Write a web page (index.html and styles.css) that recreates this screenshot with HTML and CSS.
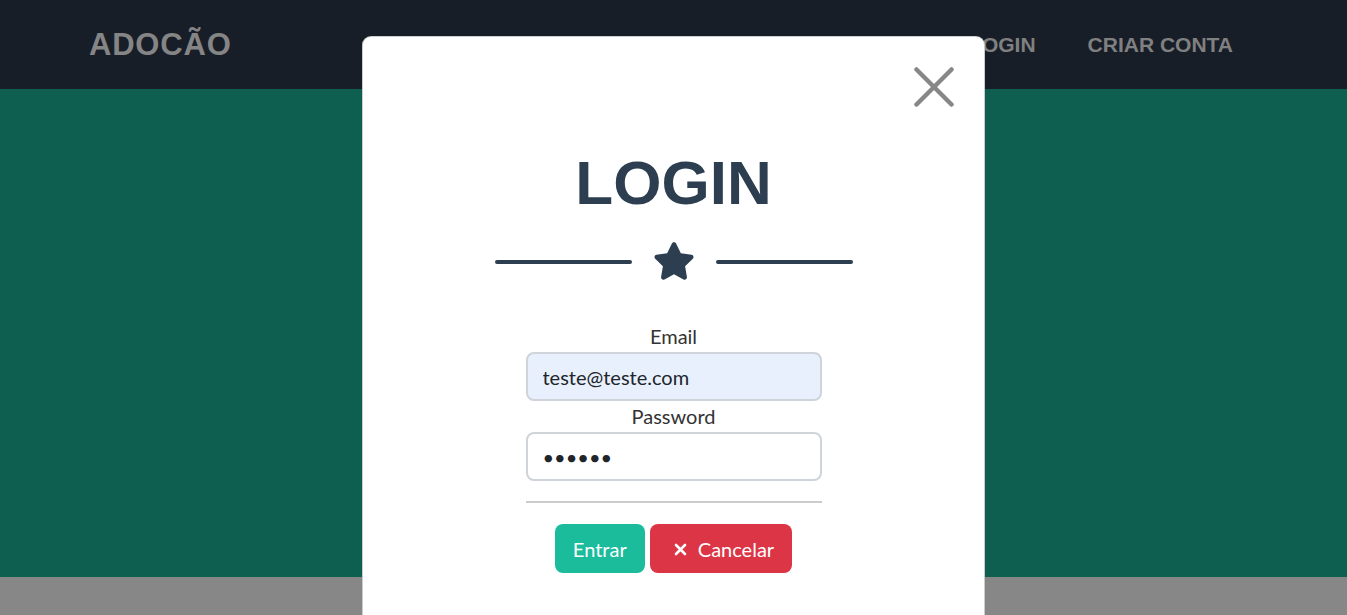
FILE: index.html
```html
<!DOCTYPE html>
<html lang="pt">
<head>
<meta charset="utf-8">
<title>Adocão - Login</title>
<link rel="stylesheet" href="styles.css">
</head>
<body>
<div class="page">
  <header class="navbar">
    <a class="brand" href="#">ADOCÃO</a>
    <nav class="nav-links">
      <a class="nav-link" href="#">LOGIN</a>
      <a class="nav-link" href="#">CRIAR CONTA</a>
    </nav>
  </header>
  <section class="masthead"></section>
  <footer class="footer"></footer>
</div>

<div class="overlay">
  <div class="modal">
    <button class="close" type="button" aria-label="Fechar">
      <svg width="40" height="40" viewBox="0 0 40 40"><path d="M2.5 2.5 L37.5 37.5 M37.5 2.5 L2.5 37.5" stroke="#878787" stroke-width="4.5" stroke-linecap="round" fill="none"/></svg>
    </button>
    <h2 class="title">LOGIN</h2>
    <div class="divider">
      <span class="divider-line"></span>
      <svg class="star" width="42" height="40" viewBox="0 0 576 540"><path fill="#2c3e50" d="M259.3 17.8L194 150.2 47.9 171.5c-26.2 3.8-36.7 36.1-17.7 54.6l105.7 103-25 145.5c-4.5 26.3 23.2 46 46.4 33.7L288 439.6l130.7 68.7c23.2 12.2 50.9-7.4 46.4-33.7l-25-145.5 105.7-103c19-18.5 8.5-50.8-17.7-54.6L382 150.2 316.7 17.8c-11.7-23.6-45.6-23.9-57.4 0z"/></svg>
      <span class="divider-line"></span>
    </div>
    <form class="form">
      <label class="label" for="email">Email</label>
      <input class="input autofill" id="email" type="email" value="teste@teste.com">
      <label class="label" for="password">Password</label>
      <input class="input" id="password" type="password" value="123456">
      <hr class="rule">
      <div class="actions">
        <button class="btn btn-primary" type="button">Entrar</button>
        <button class="btn btn-danger" type="button"><span class="icon"><svg width="13" height="13" viewBox="0 0 13 13"><path d="M2 2 L11 11 M11 2 L2 11" stroke="#fff" stroke-width="2.6" stroke-linecap="round" fill="none"/></svg></span> Cancelar</button>
      </div>
    </form>
  </div>
</div>
</body>
</html>
```

FILE: styles.css
```css
* { box-sizing: border-box; }

html, body {
  margin: 0;
  padding: 0;
  width: 1347px;
  height: 615px;
  overflow: hidden;
}

body {
  font-family: Lato, "Liberation Sans", sans-serif;
  position: relative;
}

.page {
  display: flex;
  flex-direction: column;
  height: 615px;
}

.navbar {
  height: 89px;
  background: #171e28;
  display: flex;
  align-items: center;
  justify-content: space-between;
  padding: 0 114px 0 89px;
}

.brand {
  font-family: "Liberation Sans", Arial, sans-serif;
  font-weight: 700;
  font-size: 31px;
  line-height: 1;
  letter-spacing: 0.8px;
  color: #858585;
  text-decoration: none;
}

.nav-links {
  display: flex;
  align-items: center;
  gap: 52px;
}

.nav-link {
  font-family: "Liberation Sans", Arial, sans-serif;
  font-weight: 700;
  font-size: 21px;
  line-height: 1;
  color: #808080;
  text-decoration: none;
}

.masthead {
  height: 488px;
  background: #0e5f4f;
}

.footer {
  flex: 1;
  background: #878787;
}

.overlay {
  position: absolute;
  inset: 0;
  display: flex;
  justify-content: center;
  align-items: flex-start;
}

.modal {
  position: relative;
  margin-top: 36px;
  width: 623px;
  height: 700px;
  background: #fff;
  border: 1px solid rgba(0, 0, 0, 0.2);
  border-radius: 9px;
  display: flex;
  flex-direction: column;
  align-items: center;
  padding-top: 115px;
}

.close {
  position: absolute;
  top: 30px;
  right: 30px;
  width: 40px;
  height: 40px;
  padding: 0;
  border: 0;
  background: none;
  display: block;
}

.close svg { display: block; }

.title {
  margin: 0;
  font-family: "Liberation Sans", Arial, sans-serif;
  font-weight: 700;
  font-size: 62px;
  line-height: 62px;
  color: #2c3e50;
}

.divider {
  margin-top: 28px;
  display: flex;
  align-items: center;
  gap: 21px;
  height: 40px;
}

.divider-line {
  width: 137px;
  height: 4px;
  border-radius: 2px;
  background: #2c3e50;
}

.star { display: block; }

.form {
  margin-top: 39px;
  width: 296px;
  display: flex;
  flex-direction: column;
  align-items: stretch;
}

.label {
  display: block;
  text-align: center;
  font-size: 20px;
  line-height: 30px;
  color: #333;
  margin-bottom: 1px;
}

.input {
  height: 49px;
  width: 100%;
  border: 2px solid #ced4da;
  border-radius: 8px;
  padding: 8px 15px;
  font-family: Lato, "Liberation Sans", sans-serif;
  font-size: 20px;
  color: #212529;
  background: #fff;
  outline: none;
}

.input.autofill {
  background: #e8f0fe;
}

.rule {
  width: 100%;
  margin: 20px 0 21px;
  border: 0;
  border-top: 2px solid #cccccc;
  height: 0;
}

.actions {
  display: flex;
  justify-content: center;
  gap: 5px;
}

.btn {
  font-family: Lato, "Liberation Sans", sans-serif;
  font-size: 20px;
  line-height: 30px;
  padding: 9px 17px 8px;
  border: 1px solid transparent;
  border-radius: 8px;
  color: #fff;
  display: flex;
  align-items: center;
  white-space: pre;
}

.btn-primary { background: #1abc9c; }
.btn-danger { background: #dc3545; }

.icon {
  width: 25px;
  display: inline-flex;
  justify-content: center;
  align-items: center;
}

.icon svg { display: block; }
```
